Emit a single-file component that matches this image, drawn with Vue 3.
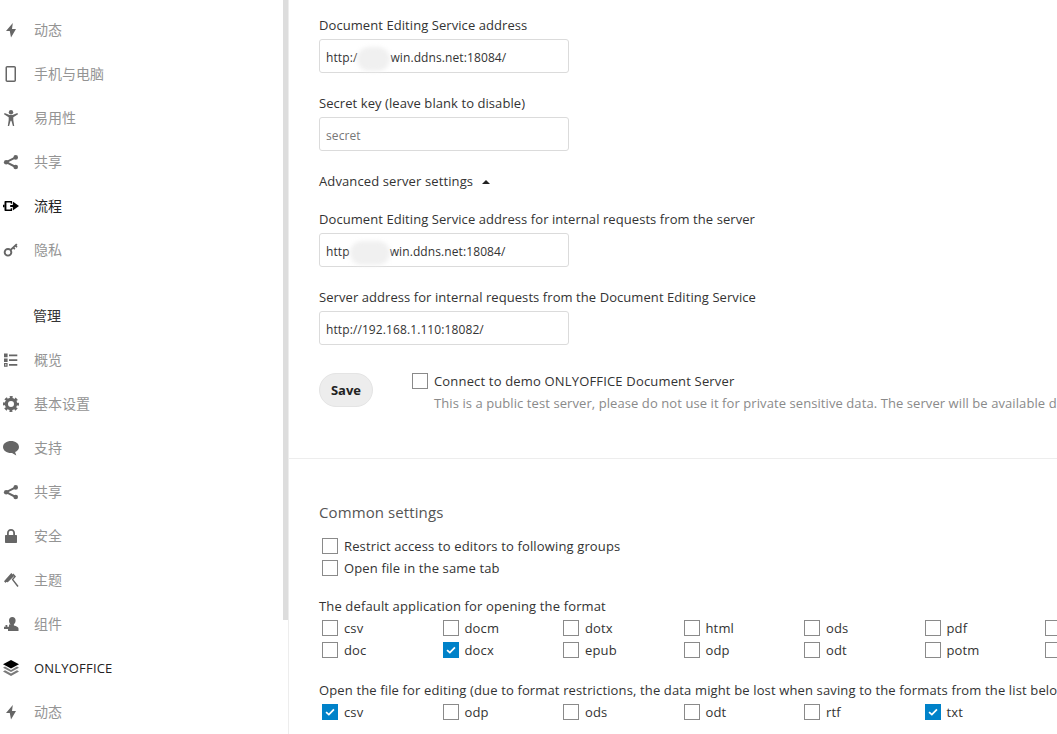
<script setup>
const nav1 = [
  { t: '动态', i: 'bolt' },
  { t: '手机与电脑', i: 'phone' },
  { t: '易用性', i: 'person' },
  { t: '共享', i: 'share' },
  { t: '流程', i: 'flow', active: true },
  { t: '隐私', i: 'key' }
]
const nav2 = [
  { t: '概览', i: 'list' },
  { t: '基本设置', i: 'gear' },
  { t: '支持', i: 'chat' },
  { t: '共享', i: 'share' },
  { t: '安全', i: 'lock' },
  { t: '主题', i: 'brush' },
  { t: '组件', i: 'users' },
  { t: 'ONLYOFFICE', i: 'layers', active: true, latin: true },
  { t: '动态', i: 'bolt' }
]
const fmtA = [
  [['csv', 0], ['docm', 0], ['dotx', 0], ['html', 0], ['ods', 0], ['pdf', 0], ['', 0]],
  [['doc', 0], ['docx', 1], ['epub', 0], ['odp', 0], ['odt', 0], ['potm', 0], ['', 0]]
]
const fmtB = [['csv', 1], ['odp', 0], ['ods', 0], ['odt', 0], ['rtf', 0], ['txt', 1]]
</script>

<template>
  <div class="page">
    <aside class="side">
      <ul class="nav">
        <li v-for="n in nav1" :key="n.t" class="item" :class="{ on: n.active }">
          <svg class="ico" viewBox="0 0 16 16"><use :href="'#i-' + n.i" /></svg>
          <span class="cjk">{{ n.t }}</span>
        </li>
      </ul>
      <h3 class="head">管理</h3>
      <ul class="nav">
        <li v-for="n in nav2" :key="n.t + n.i + 'b'" class="item" :class="{ on: n.active }">
          <svg class="ico" viewBox="0 0 16 16"><use :href="'#i-' + n.i" /></svg>
          <span :class="n.latin ? 'latin' : 'cjk'">{{ n.t }}</span>
        </li>
      </ul>
      <svg width="0" height="0" class="defs">
        <symbol id="i-bolt" viewBox="0 0 16 16"><path d="M9.800 1 3 9h3.800L8 15.500 13 7H9z" /></symbol>
        <symbol id="i-phone" viewBox="0 0 16 16"><path fill-rule="evenodd" d="M4.200 0h7.100c.9 0 1.700.8 1.700 1.700v12.600c0 .9-.8 1.700-1.700 1.700H4.200c-.9 0-1.700-.8-1.700-1.700V1.700C2.500.8 3.300 0 4.200 0zM4 1.400v13.200h7.500V1.400z" /></symbol>
        <symbol id="i-person" viewBox="0 0 16 16"><circle cx="8" cy="2.200" r="2.200" /><path d="M1 4.200l.6-1.200L6.500 5h3l4.900-2 .6 1.200-4.700 3V10l.9 6h-1.300L8.400 10.800h-.8L6.100 16H4.800l.9-6V7.200z" /></symbol>
        <symbol id="i-share" viewBox="0 0 16 16"><circle cx="3.200" cy="8.200" r="2.300" /><circle cx="12.700" cy="3.400" r="2.300" /><circle cx="12.700" cy="13" r="2.300" /><path d="M3.200 8.200l9.500-4.800M3.200 8.200l9.500 4.800" stroke="currentColor" stroke-width="2" fill="none" /></symbol>
        <symbol id="i-flow" viewBox="0 0 16 16"><path fill-rule="evenodd" d="M2.500 3h6.500v2.800H7.700V4.600H3.400v6.800h4.300v-1.200H9V13H2.500c-.6 0-1-.4-1-1V4c0-.6.4-1 1-1z" /><path d="M0 6.800h1.600v2.400H0zM7.200 7h2.600V3.500L16 8l-6.200 4.500V9H7.200z" /></symbol>
        <symbol id="i-key" viewBox="0 0 16 16"><path fill-rule="evenodd" d="M5 6a4.300 4.300 0 1 1 0 8.600A4.300 4.300 0 0 1 5 6zm0 1.900a2.400 2.400 0 1 0 0 4.800 2.400 2.400 0 0 0 0-4.800z" /><path d="M7 7.300 13.200 1.500l1.300 1.300-.9.9 1 1.100-1.200 1-1-1-.9.8.9 1.100-1.200 1-1-1-1.900 1.800z" /></symbol>
        <symbol id="i-list" viewBox="0 0 16 16"><path fill-rule="evenodd" d="M1 1.500h3.600v3.700H1zM6 2.500h8.300v1.700H6zM1 6.400h3.600v3.500H1zM6 7.300h8.300v1.700H6zM1 11h3.600v3.700H1zM2.200 12.200v1.300h1.200v-1.300zM6 12h8.300v1.700H6z" /></symbol>
        <symbol id="i-gear" viewBox="0 0 16 16"><circle cx="8" cy="8" r="4.600" fill="none" stroke="currentColor" stroke-width="3.200" /><circle cx="8" cy="8" r="6.800" fill="none" stroke="currentColor" stroke-width="2.400" stroke-dasharray="2.900 2.440" stroke-dashoffset="1.450" /></symbol>
        <symbol id="i-chat" viewBox="0 0 16 16"><path d="M8 1c4.400 0 8 2.600 8 5.900 0 2.300-1.700 4.200-3.900 5.100l1.200 3.600L9 13H8C3.600 13 0 10.200 0 6.900S3.600 1 8 1z" /></symbol>
        <symbol id="i-lock" viewBox="0 0 16 16"><path fill-rule="evenodd" d="M8 1c2.500 0 4 1.700 4 4v2h1.300c.4 0 .7.300.7.700v6.600c0 .4-.3.700-.7.700H2.700c-.4 0-.7-.3-.7-.7V7.700c0-.4.300-.7.700-.7H4V5c0-2.300 1.500-4 4-4zm0 1.800C6.700 2.800 5.800 3.700 5.800 5v2h4.400V5c0-1.300-.9-2.200-2.200-2.200z" /></symbol>
        <symbol id="i-brush" viewBox="0 0 16 16"><path d="M8.300 1l2.900 2.900-6.400 6.300-1.700-.2-.5.900L1 9.300z" /><path d="M10.300 1.500 13 4.400l-2.600 3 5.200 6.700-1.200 1-5.700-7.500 2.500-3.100-1.700-1.800z" /></symbol>
        <symbol id="i-users" viewBox="0 0 16 16"><path d="M9.300 1c2 0 3.300 1.400 3.300 3.600 0 1.500-.7 3-1.700 3.600v1.200c2.500.6 4.600 1.700 4.600 3.100V15H5v-2h-4v-2.200h1.500V9h1.800v1.800H6V8.600h1.600C6.600 7.800 6 6.200 6 4.600 6 2.400 7.300 1 9.300 1z" /></symbol>
        <symbol id="i-layers" viewBox="0 0 16 16"><path d="M8 0l8 4.300L8 8.600 0 4.300z" /><path fill="#7a7a7a" d="M2 6.600 8 9.900l6-3.300 2 1.100-8 4.300-8-4.300zM2 10.300 8 13.600l6-3.300 2 1.100L8 16l-8-4.600z" /></symbol>
      </svg>
    </aside>
    <main class="main">
      <section class="server">
        <p class="lbl">Document Editing Service address</p>
        <div class="field">
          <div class="inp">http:/<i class="blur b1"></i>win.ddns.net:18084/</div>
        </div>
        <p class="lbl">Secret key (leave blank to disable)</p>
        <div class="field"><div class="inp ph">secret</div></div>
        <p class="adv">Advanced server settings <b class="caret"></b></p>
        <p class="lbl">Document Editing Service address for internal requests from the server</p>
        <div class="field">
          <div class="inp">http<i class="blur b2"></i>win.ddns.net:18084/</div>
        </div>
        <p class="lbl">Server address for internal requests from the Document Editing Service</p>
        <div class="field"><div class="inp">http://192.168.1.110:18082/</div></div>
        <div class="saverow">
          <button class="save">Save</button>
          <div class="demo">
            <label class="chk"><span class="box"></span>Connect to demo ONLYOFFICE Document Server</label>
            <p class="hint">This is a public test server, please do not use it for private sensitive data. The server will be available during a 30-day period.</p>
          </div>
        </div>
      </section>
      <section class="common">
        <h2>Common settings</h2>
        <label class="chk line"><span class="box"></span>Restrict access to editors to following groups</label>
        <label class="chk line"><span class="box"></span>Open file in the same tab</label>
        <p class="sub s1">The default application for opening the format</p>
        <div v-for="(r, ri) in fmtA" :key="ri" class="grid">
          <label v-for="c in r" :key="c[0] + ri" class="chk">
            <span class="box" :class="{ on: c[1] }"><svg v-if="c[1]" viewBox="0 0 16 16"><path d="M3.500 8.200 6.700 11 12.500 5" /></svg></span>{{ c[0] }}
          </label>
        </div>
        <p class="sub s2">Open the file for editing (due to format restrictions, the data might be lost when saving to the formats from the list below)</p>
        <div class="grid">
          <label v-for="c in fmtB" :key="c[0]" class="chk">
            <span class="box" :class="{ on: c[1] }"><svg v-if="c[1]" viewBox="0 0 16 16"><path d="M3.500 8.200 6.700 11 12.500 5" /></svg></span>{{ c[0] }}
          </label>
        </div>
      </section>
    </main>
  </div>
</template>

<style>
html, body { margin: 0; overflow: hidden; background: #fff; }
</style>

<style scoped>
.page {
  display: flex;
  width: 1057px;
  height: 734px;
  overflow: hidden;
  font-family: "Open Sans", "Noto Sans CJK SC", sans-serif;
  font-size: 13px;
  color: #333;
}
.side {
  flex: none;
  box-sizing: border-box;
  width: 289px;
  height: 734px;
  overflow: hidden;
  padding-top: 8px;
  border-right: 1px solid #ededed;
  background: linear-gradient(#ddd, #ddd) 283px 0 / 5px 620px no-repeat;
}
.nav { list-style: none; margin: 0; padding: 0; }
.item {
  display: flex;
  align-items: center;
  height: 44px;
  color: #949494;
}
.item.on { color: #222; }
.ico { flex: none; width: 16px; height: 16px; margin: 0 15px 0 3px; fill: #666; color: #666; }
.item.on .ico { fill: #000; color: #000; }
.cjk { font-size: 14px; margin-top: -2px; }
.latin { font-size: 13px; letter-spacing: 0.2px; }
.head {
  margin: 22px 0 0;
  height: 44px;
  line-height: 44px;
  padding-left: 33px;
  font-size: 14px;
  font-weight: 400;
  color: #333;
}
.defs { position: absolute; }
.main { flex: 1; min-width: 0; overflow: hidden; }
.server { padding: 16px 0 0 30px; border-bottom: 1px solid #ededed; height: 459px; box-sizing: border-box; }
.lbl { margin: 0; line-height: 18px; white-space: nowrap; letter-spacing: 0.07px; }
.field { width: 250px; margin: 5px 0 21px; }
.inp {
  box-sizing: border-box;
  height: 34px;
  line-height: 35px;
  padding: 0 6px;
  border: 1px solid #dbdbdb;
  border-radius: 3px;
  font-size: 12px;
  letter-spacing: 0.1px;
  color: #333;
  white-space: nowrap;
}
.inp.ph { color: #777; }
.blur {
  display: inline-block;
  height: 24px;
  vertical-align: middle;
  background: #f0f0f0;
  border-radius: 12px;
  filter: blur(2px);
}
.b1 { width: 33px; }
.b2 { width: 40px; }
.adv { margin: 0 0 20px; line-height: 18px; letter-spacing: 0.12px; }
.caret {
  display: inline-block;
  margin: 0 0 2px 5px;
  border-left: 4px solid transparent;
  border-right: 4px solid transparent;
  border-bottom: 4px solid #222;
  vertical-align: middle;
}
.saverow { display: flex; margin-top: 28px; }
.save {
  flex: none;
  width: 54px;
  height: 34px;
  padding: 0;
  border: 1px solid #e4e4e4;
  border-radius: 17px;
  background: #ededed;
  font: 700 13px "Open Sans", sans-serif;
  color: #222;
}
.demo { margin: -1px 0 0 39px; min-width: 0; letter-spacing: 0.17px; }
.chk { display: flex; align-items: center; white-space: nowrap; }
.box {
  flex: none;
  box-sizing: border-box;
  width: 16px;
  height: 16px;
  margin-right: 6px;
  border: 1px solid #8a8a8a;
  display: block;
}
.box.on { background: #0082c9; border-color: #0082c9; }
.box svg { display: block; width: 14px; height: 14px; fill: none; stroke: #fff; stroke-width: 2; }
.hint { margin: 4px 0 0 22px; color: #8a8a8a; line-height: 18px; white-space: nowrap; letter-spacing: 0.08px; }
.common { padding: 43px 0 0 30px; letter-spacing: 0.14px; }
.common h2 { margin: 0 0 13px; font-size: 15px; font-weight: 400; line-height: 20px; color: #555; letter-spacing: 0.1px; }
.line { height: 22px; margin-left: 3px; }
.sub { margin: 0; line-height: 18px; white-space: nowrap; }
.s1 { margin-top: 18px; margin-bottom: 2px; }
.s2 { margin-top: 20px; margin-bottom: 2px; }
.grid { display: flex; margin-left: 3px; height: 22px; }
.grid .chk { flex: none; width: 120.500px; }
</style>
